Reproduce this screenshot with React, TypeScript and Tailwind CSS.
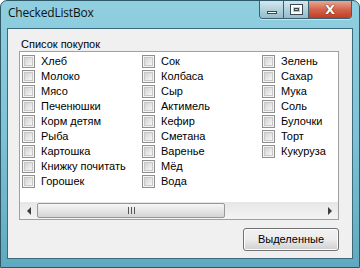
const columns: string[][] = [
  ["Хлеб", "Молоко", "Мясо", "Печенюшки", "Корм детям", "Рыба", "Картошка", "Книжку почитать", "Горошек"],
  ["Сок", "Колбаса", "Сыр", "Актимель", "Кефир", "Сметана", "Варенье", "Мёд", "Вода"],
  ["Зелень", "Сахар", "Мука", "Соль", "Булочки", "Торт", "Кукуруза"],
];

function CheckBox() {
  return (
    <div className="w-[13px] h-[13px] shrink-0 border border-[#8e8f8f] bg-[#f4f4f4] p-[1px]">
      <div className="w-full h-full border border-[#c8c8c8] bg-gradient-to-br from-[#d2d2d2] via-[#e4e4e4] to-[#f7f7f7]" />
    </div>
  );
}

function CaptionButtons() {
  return (
    <div className="flex h-[18px] mr-[7px] rounded-b-[4px] border border-t-0 border-[#3d5f6e] overflow-hidden shadow-[0_1px_0_rgba(255,255,255,0.5)]">
      <div className="w-[24px] flex items-center justify-center bg-gradient-to-b from-[#d4e8ee] via-[#b2d2dc] to-[#93bccb] border-r border-[#3d5f6e]">
        <div className="w-[10px] h-[3px] mt-[5px] bg-white border border-[#3a4a55]" />
      </div>
      <div className="w-[25px] flex items-center justify-center bg-gradient-to-b from-[#d4e8ee] via-[#b2d2dc] to-[#93bccb] border-r border-[#3d5f6e]">
        <div className="w-[11px] h-[9px] border-2 border-white outline outline-1 outline-[#3a4a55] flex items-center justify-center">
          <div className="w-[5px] h-[3px] border border-[#3a4a55]" />
        </div>
      </div>
      <div className="w-[42px] flex items-center justify-center bg-gradient-to-b from-[#e8a896] via-[#d2644c] to-[#c23b22]">
        <span className="text-white font-bold text-[13px] leading-none font-['DejaVu_Sans',sans-serif] [text-shadow:0_0_1px_#4a1a10,0_0_1px_#4a1a10]">
          X
        </span>
      </div>
    </div>
  );
}

function HScrollBar() {
  return (
    <div className="h-[17px] flex bg-gradient-to-b from-[#e6e6e6] to-[#f4f4f4]">
      <div className="w-[17px] flex items-center justify-center">
        <div className="w-0 h-0 border-y-[4px] border-y-transparent border-r-[4px] border-r-[#3c3c3c]" />
      </div>
      <div className="w-[188px] my-[1px] rounded-[2px] border border-[#979797] bg-gradient-to-b from-[#f6f6f6] via-[#e6e6e6] to-[#d4d4d4] flex items-center justify-center gap-[2px]">
        <div className="w-[1px] h-[7px] bg-[#555]" />
        <div className="w-[1px] h-[7px] bg-[#555]" />
        <div className="w-[1px] h-[7px] bg-[#555]" />
      </div>
      <div className="flex-1" />
      <div className="w-[17px] flex items-center justify-center">
        <div className="w-0 h-0 border-y-[4px] border-y-transparent border-l-[4px] border-l-[#3c3c3c]" />
      </div>
    </div>
  );
}

export default function App() {
  return (
    <div className="w-[360px] h-[268px] flex flex-col rounded-t-[7px] border border-[#2f5868] bg-gradient-to-b from-[#8fcfe0] via-[#7dc2d5] to-[#5faabf] font-['Liberation_Sans',Arial,sans-serif] text-[11px] text-black overflow-hidden">
      {/* Title bar */}
      <div className="h-[27px] flex items-start justify-between">
        <div className="pl-[7px] pt-[4px] text-[12px] leading-[16px] text-[#111] font-['Open_Sans',sans-serif] tracking-[-0.2px]">
          CheckedListBox
        </div>
        <CaptionButtons />
      </div>

      {/* Client area */}
      <div className="mx-[6px] h-[231px] border border-[#3c6a7c] bg-[#f0f0f0] flex flex-col">
        <div className="pl-[13px] pt-[9px] leading-[13px] h-[22px]">Список покупок</div>
        <div className="ml-[11px] w-[320px] h-[169px] border border-[#a0a0a0] bg-white flex flex-col">
          <div className="flex-1 flex pt-[2px] overflow-hidden">
            {columns.map((col, ci) => (
              <div key={ci} className="w-[120px] shrink-0 flex flex-col">
                {col.map((item) => (
                  <div key={item} className="h-[15px] flex items-center gap-[6px] pl-[2px] whitespace-nowrap">
                    <CheckBox />
                    <span className="leading-[13px]">{item}</span>
                  </div>
                ))}
              </div>
            ))}
          </div>
          <HScrollBar />
        </div>
        <div className="flex justify-end pr-[13px] mt-[8px]">
          <button className="w-[96px] h-[23px] rounded-[3px] border border-[#707070] bg-gradient-to-b from-[#f2f2f2] via-[#ebebeb] to-[#cfcfcf] shadow-[inset_0_0_0_1px_#fcfcfc] text-[11px] leading-none">
            Выделенные
          </button>
        </div>
      </div>
    </div>
  );
}
